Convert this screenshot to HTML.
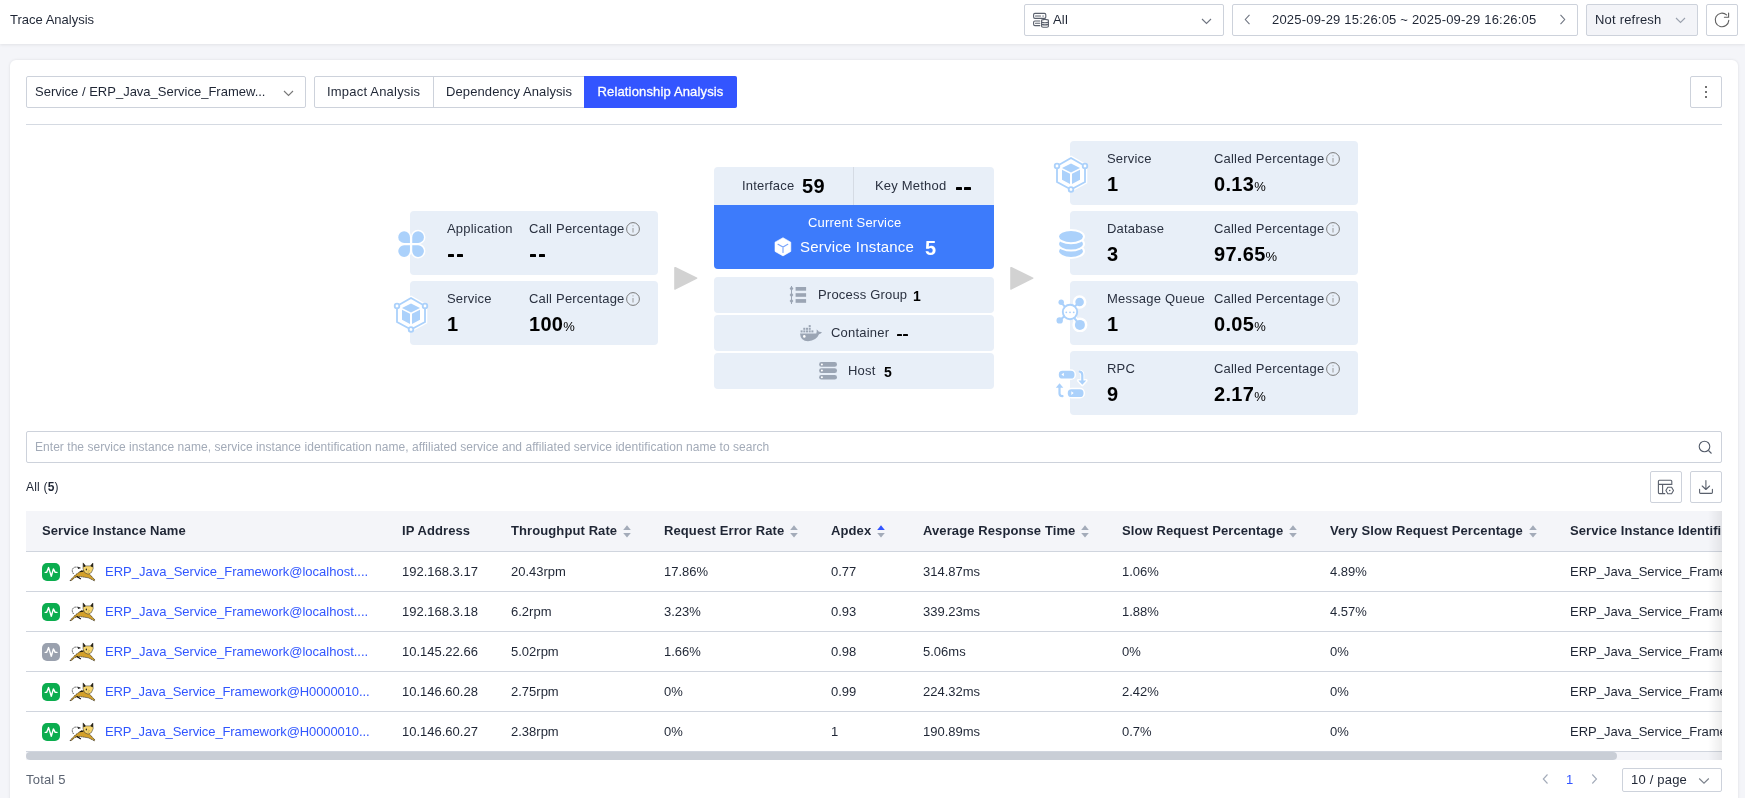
<!DOCTYPE html>
<html><head><meta charset="utf-8">
<style>
*{box-sizing:border-box;margin:0;padding:0}
html,body{width:1745px;height:798px;overflow:hidden}
body{background:#f4f5f9;font-family:"Liberation Sans",sans-serif;color:#1f2635;font-size:13px;position:relative;letter-spacing:0.2px}
.abs{position:absolute}
.hdr{position:absolute;left:0;top:0;width:1745px;height:44px;background:#fff;box-shadow:0 1px 3px rgba(0,0,0,0.08)}
.box{position:absolute;border:1px solid #cdd2db;border-radius:2px;background:#fff}
.card{position:absolute;left:10px;top:60px;width:1728px;height:760px;background:#fff;border-radius:6px;box-shadow:0 0 3px rgba(0,0,0,0.1)}
.t{position:absolute;white-space:nowrap;line-height:16px}
.tc{position:absolute;border-radius:4px;background:#e8eff8}
.lbl{position:absolute;white-space:nowrap;line-height:16px;color:#2a3140}
.val{position:absolute;white-space:nowrap;font-weight:bold;font-size:20px;line-height:20px;color:#000;letter-spacing:0.3px}
.val small{font-size:13px;font-weight:normal;letter-spacing:0}
.ci{position:absolute}
.th{position:absolute;top:511px;height:40px;line-height:40px;font-weight:bold;color:#1f2635;white-space:nowrap;letter-spacing:0.1px}
.td{position:absolute;height:40px;line-height:42px;white-space:nowrap;color:#1f2635;letter-spacing:0}
.rowb{position:absolute;left:26px;width:1696px;height:1px;background:#d0d5de}
.lnk{color:#3056ff}
</style></head><body>
<div id="root" style="position:absolute;left:0;top:0;width:1745px;height:798px;will-change:transform">
<div class="hdr"></div>
<div class="t" style="left:10px;top:12px;letter-spacing:0">Trace Analysis</div>

<!-- top right controls -->
<div class="box" style="left:1024px;top:4px;width:200px;height:32px"></div>
<svg class="abs" style="left:1030px;top:8px" width="24" height="24" viewBox="1030 8 24 24" fill="none" stroke="#5a606c" stroke-width="1.1" stroke-linejoin="round" stroke-linecap="round">
<rect x="1033.6" y="13.4" width="12.2" height="5" rx="1.3"/>
<path d="M1035.5 16H1040.5M1042.8 16H1043.4"/>
<path d="M1039.8 21H1034.9Q1033.6 21 1033.6 22.3V24.3Q1033.6 25.6 1034.9 25.6H1039.8M1035.5 23.3H1039.8"/>
<path d="M1041.6 20.4Q1041.6 19.4 1045 19.4Q1048.4 19.4 1048.4 20.4V26.2Q1048.4 27.3 1045 27.3Q1041.6 27.3 1041.6 26.2Z"/>
<path d="M1041.6 22.2Q1045 23.2 1048.4 22.2M1041.6 24.4Q1045 25.4 1048.4 24.4"/>
</svg>
<div class="t" style="left:1053px;top:12px">All</div>
<svg class="abs" style="left:1200.5px;top:17.5px" width="11" height="7" viewBox="0 0 11 7"><path d="M1 1l4.5 4.5L10 1" fill="none" stroke="#6e7480" stroke-width="1.1"/></svg>

<div class="box" style="left:1232px;top:4px;width:346px;height:32px"></div>
<svg class="abs" style="left:1244px;top:14px" width="7" height="11" viewBox="0 0 7 11"><path d="M5.5 0.8L1.3 5.5l4.2 4.7" fill="none" stroke="#6e7480" stroke-width="1.1"/></svg>
<div class="t" style="left:1272px;top:12px">2025-09-29 15:26:05 ~ 2025-09-29 16:26:05</div>
<svg class="abs" style="left:1559px;top:14px" width="7" height="11" viewBox="0 0 7 11"><path d="M1.5 0.8l4.2 4.7-4.2 4.7" fill="none" stroke="#6e7480" stroke-width="1.1"/></svg>

<div class="box" style="left:1586px;top:4px;width:112px;height:32px;background:#f3f4f8"></div>
<div class="t" style="left:1595px;top:12px">Not refresh</div>
<svg class="abs" style="left:1675px;top:17px" width="11" height="7" viewBox="0 0 11 7"><path d="M1 1l4.5 4.5L10 1" fill="none" stroke="#9aa1ad" stroke-width="1.1"/></svg>

<div class="box" style="left:1706px;top:4px;width:32px;height:32px"></div>
<svg class="abs" style="left:1708px;top:6px" width="28" height="28" viewBox="1708 6 28 28" fill="none" stroke="#606060" stroke-width="1.1" stroke-linecap="round">
<path d="M1728.8 20.4A6.8 6.8 0 1 1 1726.6 14.9"/>
<path d="M1728.6 13V17.3H1724.4"/>
</svg>

<div class="card"></div>

<!-- toolbar -->
<div class="box" style="left:26px;top:76px;width:280px;height:32px"></div>
<div class="t" style="left:35px;top:84px;letter-spacing:0">Service / ERP_Java_Service_Framew...</div>
<svg class="abs" style="left:282.5px;top:89.5px" width="11" height="7" viewBox="0 0 11 7"><path d="M1 1l4.5 4.5L10 1" fill="none" stroke="#777" stroke-width="1.1"/></svg>

<div class="box" style="left:314px;top:76px;width:423px;height:32px"></div>
<div class="abs" style="left:433px;top:76px;width:1px;height:32px;background:#cdd2db"></div>
<div class="abs" style="left:584px;top:76px;width:153px;height:32px;background:#3355ff;border-radius:0 2px 2px 0"></div>
<div class="t" style="left:327px;top:84px">Impact Analysis</div>
<div class="t" style="left:446px;top:84px;letter-spacing:0.1px">Dependency Analysis</div>
<div class="t" style="left:597.5px;top:84px;color:#fff;letter-spacing:0.15px;-webkit-text-stroke:0.3px #fff">Relationship Analysis</div>

<div class="box" style="left:1690px;top:76px;width:32px;height:32px"></div>
<div class="abs" style="left:1705px;top:86px;width:2px;height:2px;background:#444;border-radius:1px"></div>
<div class="abs" style="left:1705px;top:91px;width:2px;height:2px;background:#444;border-radius:1px"></div>
<div class="abs" style="left:1705px;top:96px;width:2px;height:2px;background:#444;border-radius:1px"></div>

<div class="abs" style="left:26px;top:124px;width:1696px;height:1px;background:#d5dae2"></div>

<!-- TOPOLOGY: left cards -->
<div class="tc" style="left:410px;top:211px;width:248px;height:64px"></div>
<div class="tc" style="left:410px;top:281px;width:248px;height:64px"></div>

<!-- center -->
<div class="tc" style="left:714px;top:167px;width:280px;height:102px;background:#e8eff8"></div>
<div class="abs" style="left:714px;top:205px;width:280px;height:64px;background:#3d7bfb;border-radius:0 0 4px 4px"></div>
<div class="abs" style="left:853px;top:167px;width:1px;height:38px;background:#d5dbe4"></div>
<div class="tc" style="left:714px;top:277px;width:280px;height:36px"></div>
<div class="tc" style="left:714px;top:315px;width:280px;height:36px"></div>
<div class="tc" style="left:714px;top:353px;width:280px;height:36px"></div>

<!-- right cards -->
<div class="tc" style="left:1070px;top:141px;width:288px;height:64px"></div>
<div class="tc" style="left:1070px;top:211px;width:288px;height:64px"></div>
<div class="tc" style="left:1070px;top:281px;width:288px;height:64px"></div>
<div class="tc" style="left:1070px;top:351px;width:288px;height:64px"></div>


<!-- topo left texts -->
<div class="lbl" style="left:447px;top:221px">Application</div>
<div class="lbl" style="left:529px;top:221px">Call Percentage</div>
<div class="abs" style="left:448px;top:254px;width:6px;height:3px;background:#000;border-radius:0.6px"></div><div class="abs" style="left:457px;top:254px;width:6px;height:3px;background:#000;border-radius:0.6px"></div>
<div class="abs" style="left:530px;top:254px;width:6px;height:3px;background:#000;border-radius:0.6px"></div><div class="abs" style="left:539px;top:254px;width:6px;height:3px;background:#000;border-radius:0.6px"></div>
<div class="lbl" style="left:447px;top:291px">Service</div>
<div class="lbl" style="left:529px;top:291px">Call Percentage</div>
<div class="val" style="left:447px;top:314px">1</div>
<div class="val" style="left:529px;top:314px">100<small>%</small></div>
<!-- center texts -->
<div class="lbl" style="left:742px;top:178px">Interface</div>
<div class="val" style="left:802px;top:176px">59</div>
<div class="lbl" style="left:875px;top:178px">Key Method</div>
<div class="abs" style="left:956px;top:187px;width:6.2px;height:3px;background:#000;border-radius:0.6px"></div><div class="abs" style="left:964.4px;top:187px;width:6.4px;height:3px;background:#000;border-radius:0.6px"></div>
<div class="t" style="left:808px;top:215px;color:#fff">Current Service</div>
<div class="t" style="left:800px;top:239px;color:#fff;font-size:15px;line-height:16px">Service Instance</div>
<div class="val" style="left:925px;top:238px;color:#fff">5</div>
<div class="lbl" style="left:818px;top:287px">Process Group</div>
<div class="val" style="left:913px;top:288px;font-size:14px;line-height:16px">1</div>
<div class="lbl" style="left:831px;top:325px">Container</div>
<div class="abs" style="left:897px;top:334px;width:4.8px;height:2px;background:#000;border-radius:0.6px"></div><div class="abs" style="left:903.2px;top:334px;width:4.9px;height:2px;background:#000;border-radius:0.6px"></div>
<div class="lbl" style="left:848px;top:363px">Host</div>
<div class="val" style="left:884px;top:364px;font-size:14px;line-height:16px">5</div>
<!-- right texts -->
<div class="lbl" style="left:1107px;top:151px">Service</div>
<div class="lbl" style="left:1214px;top:151px">Called Percentage</div>
<div class="val" style="left:1107px;top:174px">1</div>
<div class="val" style="left:1214px;top:174px">0.13<small>%</small></div>
<div class="lbl" style="left:1107px;top:221px">Database</div>
<div class="lbl" style="left:1214px;top:221px">Called Percentage</div>
<div class="val" style="left:1107px;top:244px">3</div>
<div class="val" style="left:1214px;top:244px">97.65<small>%</small></div>
<div class="lbl" style="left:1107px;top:291px">Message Queue</div>
<div class="lbl" style="left:1214px;top:291px">Called Percentage</div>
<div class="val" style="left:1107px;top:314px">1</div>
<div class="val" style="left:1214px;top:314px">0.05<small>%</small></div>
<div class="lbl" style="left:1107px;top:361px">RPC</div>
<div class="lbl" style="left:1214px;top:361px">Called Percentage</div>
<div class="val" style="left:1107px;top:384px">9</div>
<div class="val" style="left:1214px;top:384px">2.17<small>%</small></div>


<!-- topo icons -->
<svg class="abs" style="left:390px;top:223px" width="42" height="42" viewBox="-21 -21 42 42">
<g fill="#abd1fb" stroke="#fff" stroke-width="1.5">
<path d="M-0.3 -0.3H-6.8A6.6 6.6 0 1 1 -0.3 -6.8Z"/><path d="M0.5 -0.3V-6.8A6.6 6.6 0 1 1 7 -0.3Z"/>
<path d="M-0.3 0.5V7A6.6 6.6 0 1 1 -6.8 0.5Z"/><path d="M0.5 0.5H7A6.6 6.6 0 1 1 0.5 7Z"/>
</g></svg>

<svg class="abs" style="left:391px;top:293.5px" width="40" height="40" viewBox="-20 -20 40 40">
<use href="#hexcube"/></svg>
<svg class="abs" style="left:1051px;top:153.5px" width="40" height="40" viewBox="-20 -20 40 40">
<use href="#hexcube"/></svg>
<svg width="0" height="0" style="position:absolute">
<defs>
<g id="hexcube">
<path d="M0 -16L14 -8V8L0 15.5L-14 8V-8Z" fill="#fff" stroke="#fff" stroke-width="4.5"/>
<path d="M0 -16L14 -8V8L0 15.5L-14 8V-8Z" fill="#fff" stroke="#abd1fb" stroke-width="1.8"/>
<circle cx="-14" cy="-8" r="2.3" fill="#fff" stroke="#abd1fb" stroke-width="1.8"/>
<circle cx="14" cy="-8" r="2.3" fill="#fff" stroke="#abd1fb" stroke-width="1.8"/>
<circle cx="0" cy="15.5" r="2.3" fill="#fff" stroke="#abd1fb" stroke-width="1.8"/>
<path d="M0 -10.5L9 -6L0 -1.5L-9 -6Z" fill="#abd1fb"/>
<path d="M-9 -4.3L-1 -0.2V10L-9 5.8Z" fill="#abd1fb"/>
<path d="M1 -0.2L9 -4.3V5.8L1 10Z" fill="#abd1fb"/>
</g>
</defs></svg>

<svg class="abs" style="left:1051px;top:224px" width="40" height="40" viewBox="-20 -20 40 40">
<ellipse cx="0" cy="7.25" rx="13" ry="6.65" fill="#abd1fb" stroke="#fff" stroke-width="2"/>
<ellipse cx="0" cy="-0.1" rx="13" ry="6.65" fill="#abd1fb" stroke="#fff" stroke-width="2"/>
<ellipse cx="0" cy="-7.45" rx="13" ry="6.65" fill="#abd1fb" stroke="#fff" stroke-width="2"/>
</svg>

<svg class="abs" style="left:1050px;top:292px" width="40" height="40" viewBox="1050 292 40 40">
<g stroke="#fff" stroke-width="5" fill="#fff" stroke-linecap="round">
<line x1="1061.2" y1="302.3" x2="1079.9" y2="324.9"/><line x1="1079.6" y1="302" x2="1059.7" y2="320.4"/>
<circle cx="1061.2" cy="302.3" r="2.7"/><circle cx="1079.6" cy="302" r="4.3"/><circle cx="1059.7" cy="320.4" r="3.2"/><circle cx="1079.9" cy="324.9" r="5"/>
</g>
<g stroke="#abd1fb" stroke-width="2" fill="#abd1fb">
<line x1="1061.2" y1="302.3" x2="1079.9" y2="324.9"/><line x1="1079.6" y1="302" x2="1059.7" y2="320.4"/>
<circle cx="1061.2" cy="302.3" r="2.7" stroke="none"/><circle cx="1079.6" cy="302" r="4.3" stroke="none"/><circle cx="1059.7" cy="320.4" r="3.2" stroke="none"/><circle cx="1079.9" cy="324.9" r="5" stroke="none"/>
</g>
<circle cx="1070" cy="312" r="7.2" fill="#fff" stroke="#abd1fb" stroke-width="1.9"/>
<g fill="#abd1fb"><circle cx="1066.3" cy="312.3" r="0.9"/><circle cx="1070" cy="312.3" r="0.9"/><circle cx="1073.7" cy="312.3" r="0.9"/></g>
</svg>

<svg class="abs" style="left:1050px;top:362px" width="40" height="42" viewBox="1050 362 40 42">
<g stroke="#fff" stroke-width="3" fill="#fff" stroke-linejoin="round">
<rect x="1058.8" y="370.8" width="15.7" height="7.8" rx="3.6"/>
<rect x="1067.8" y="389.2" width="15.7" height="7.8" rx="3.6"/>
<path d="M1079.5 371.8Q1082.3 372 1082.3 375V381" fill="none" stroke-width="4"/>
<path d="M1078.4 380.4H1086.2L1082.3 384.8Z"/>
<path d="M1059.5 385v8.5Q1059.5 396 1062.5 396" fill="none" stroke-width="4"/>
<path d="M1055.8 387.7H1063.3L1059.55 383.2Z"/>
</g>
<g fill="#abd1fb" stroke-linejoin="round">
<rect x="1058.8" y="370.8" width="15.7" height="7.8" rx="3.6"/>
<rect x="1067.8" y="389.2" width="15.7" height="7.8" rx="3.6"/>
<path d="M1079.8 371.6Q1082.3 372 1082.3 375V381" fill="none" stroke="#abd1fb" stroke-width="2.2" stroke-linecap="round"/>
<path d="M1078.4 380.4H1086.2L1082.3 384.8Z"/>
<path d="M1059.5 386v7.5Q1059.5 396 1062.5 396.2" fill="none" stroke="#abd1fb" stroke-width="2.2" stroke-linecap="round"/>
<path d="M1055.8 387.7H1063.3L1059.55 383.2Z"/>
<path d="M1063.8 372.7v3.6l-2.4-1.8Z" fill="#fff"/>
<path d="M1071.3 391.3v3.6l2.4-1.8Z" fill="#fff"/>
</g>
</svg>

<!-- white cube -->
<svg class="abs" style="left:772px;top:235px" width="22" height="24" viewBox="772 235 22 24">
<path d="M783 237.7L790.8 242.2V251.4L783 255.9L775 251.4V242.2Z" fill="#fff" stroke="#fff" stroke-width="0.6" stroke-linejoin="round"/>
<path d="M778 244.3L783 247L787.8 244.3M783 247V252.5" fill="none" stroke="#7ba5fb" stroke-width="1.1" stroke-linecap="round"/>
</svg>

<!-- process group -->
<svg class="abs" style="left:786px;top:283px" width="24" height="24" viewBox="786 283 24 24">
<line x1="791.5" y1="286" x2="791.5" y2="304" stroke="#9ba5b4" stroke-width="1"/>
<g fill="#9ba5b4"><path d="M791.5 286.3l1.9 2.3-1.9 2.3-1.9-2.3Z"/><path d="M791.5 292.6l1.9 2.3-1.9 2.3-1.9-2.3Z"/><path d="M791.5 298.7l1.9 2.3-1.9 2.3-1.9-2.3Z"/>
<rect x="795.6" y="287" width="10.5" height="3.7"/><rect x="795.6" y="293.2" width="10.5" height="3.6"/><rect x="795.6" y="299.1" width="10.5" height="3.7"/></g>
</svg>

<!-- docker -->
<svg class="abs" style="left:798px;top:322px" width="26" height="22" viewBox="798 322 26 22">
<g fill="#9ba5b4">
<path d="M800 333.4H816.3Q817 331.2 816.6 329.4Q818.2 330 818.8 331.8Q820.8 331.6 822 332.3Q821 334 819 334.2Q816.5 340.5 808 341.2Q800.6 341.2 800 333.4Z"/>
<rect x="800.6" y="330.4" width="2" height="2"/><rect x="803.3" y="330.4" width="2" height="2"/><rect x="806" y="330.4" width="2" height="2"/><rect x="808.7" y="330.4" width="2" height="2"/><rect x="811.4" y="330.4" width="2" height="2"/>
<rect x="803.3" y="327.8" width="2" height="2"/><rect x="806" y="327.8" width="2" height="2"/><rect x="808.7" y="327.8" width="2" height="2"/>
<rect x="808.7" y="325.1" width="2" height="2"/>
</g>
<circle cx="804.3" cy="336.4" r="1.3" fill="#fff"/>
</svg>

<!-- host -->
<svg class="abs" style="left:817px;top:360px" width="22" height="22" viewBox="817 360 22 22">
<g fill="#9ba5b4"><rect x="819.1" y="362.1" width="17.9" height="4.7" rx="2.3"/><rect x="819.1" y="368.2" width="17.9" height="4.8" rx="2.3"/><rect x="819.1" y="374.9" width="17.9" height="4.7" rx="2.3"/></g>
<g fill="#fff"><circle cx="821.9" cy="364.45" r="1"/><circle cx="821.9" cy="370.6" r="1"/><circle cx="821.9" cy="377.25" r="1"/></g>
</svg>

<!-- info icons -->
<svg width="0" height="0" style="position:absolute"><defs><g id="info"><circle cx="0" cy="0" r="6.4" fill="none" stroke="#7a7a7a" stroke-width="1"/><path d="M0 -3.6V-2.6M0 -1V3.5" stroke="#9a9a9a" stroke-width="1"/></g></defs></svg>
<svg class="abs" style="left:623px;top:219px" width="20" height="20" viewBox="-10 -10 20 20"><use href="#info"/></svg>
<svg class="abs" style="left:623px;top:289px" width="20" height="20" viewBox="-10 -10 20 20"><use href="#info"/></svg>
<svg class="abs" style="left:1323px;top:149px" width="20" height="20" viewBox="-10 -10 20 20"><use href="#info"/></svg>
<svg class="abs" style="left:1323px;top:219px" width="20" height="20" viewBox="-10 -10 20 20"><use href="#info"/></svg>
<svg class="abs" style="left:1323px;top:289px" width="20" height="20" viewBox="-10 -10 20 20"><use href="#info"/></svg>
<svg class="abs" style="left:1323px;top:359px" width="20" height="20" viewBox="-10 -10 20 20"><use href="#info"/></svg>

<!-- arrows -->
<svg class="abs" style="left:673px;top:264.5px" width="26" height="26" viewBox="0 0 26 26"><path d="M1.2 2.8Q1.2 1.5 2.6 2.1L24 12.6Q25 13.2 24 13.8L2.6 24.6Q1.2 25.2 1.2 23.9Z" fill="#d2d2d2"/></svg>
<svg class="abs" style="left:1009px;top:264.5px" width="26" height="26" viewBox="0 0 26 26"><path d="M1.2 2.8Q1.2 1.5 2.6 2.1L24 12.6Q25 13.2 24 13.8L2.6 24.6Q1.2 25.2 1.2 23.9Z" fill="#d2d2d2"/></svg>

<!-- search -->
<div class="box" style="left:26px;top:431px;width:1696px;height:32px"></div>
<div class="t" style="left:35px;top:439px;font-size:12px;color:#a3abb8;letter-spacing:0.04px">Enter the service instance name, service instance identification name, affiliated service and affiliated service identification name to search</div>
<svg class="abs" style="left:1697.8px;top:439.8px" width="15" height="15" viewBox="0 0 15 15"><circle cx="6.5" cy="6.5" r="5.3" fill="none" stroke="#555d6b" stroke-width="1.1"/><path d="M10.5 10.5l3 3" stroke="#555d6b" stroke-width="1.1"/></svg>

<div class="t" style="left:26px;top:479px;font-size:12px">All (<b>5</b>)</div>
<div class="box" style="left:1650px;top:471px;width:32px;height:32px"></div>
<div class="box" style="left:1690px;top:471px;width:32px;height:32px"></div>

<!-- table -->
<div class="abs" style="left:26px;top:511px;width:1696px;height:40px;background:#f4f5f9"></div>
<div class="rowb" style="top:551px"></div>
<div class="rowb" style="top:591px"></div>
<div class="rowb" style="top:631px"></div>
<div class="rowb" style="top:671px"></div>
<div class="rowb" style="top:711px"></div>
<div class="rowb" style="top:751px"></div>
<div class="abs" style="left:26px;top:752px;width:1696px;height:8px;background:#f3f4f8"></div>
<div class="abs" style="left:26px;top:752px;width:1591px;height:8px;background:#c9ced6;border-radius:4px"></div>

<!-- table content -->
<svg width="0" height="0" style="position:absolute"><defs>
<g id="tomcat">
<path d="M73.6 574Q70.6 569.5 74.3 567.4Q76.5 566.6 80.6 567.9" fill="none" stroke="#222" stroke-width="0.8" stroke-dasharray="1.2 0.5"/>
<path d="M77.8 567L80.9 567.9L78 569Z" fill="#111"/>
<path d="M70 580.6L71.6 578.8L75.5 574.8L81.5 570.6L85.6 570.8L89 573.6L95 580L94.4 580.8L88.3 577.8L80.5 576.6L74.8 577.4L71.8 580.4Z" fill="#d3a02a" stroke="#222" stroke-width="0.7" stroke-linejoin="round" stroke-dasharray="1.5 0.6"/>
<path d="M83.1 562.9L85.6 565.9L90.1 565.9L92.9 563L93.2 568.6L91.4 572.6L88.1 574.2L84.7 572.6L83 568.8Z" fill="#f6d56c" stroke="#2a2a2a" stroke-width="0.5" stroke-linejoin="round"/>
<path d="M83.1 562.9L85.8 566.3L83.5 567.2Z" fill="#111"/><path d="M92.9 563L90.4 566.3L92.8 567.2Z" fill="#111"/>
<path d="M76.6 576.3L80.8 579" stroke="#111" stroke-width="1.2"/>
<ellipse cx="86.3" cy="569.6" rx="0.6" ry="1" fill="#111"/>
<path d="M88.5 570.2L89.6 570.8M87.6 572L88.8 572" stroke="#7a6020" stroke-width="0.5"/>
<path d="M79.8 571.7L83.2 571.3" stroke="#111" stroke-width="1.1"/>
</g></defs></svg>
<svg class="abs" style="left:622.5px;top:524px" width="8" height="15" viewBox="0 0 8 15"><path d="M0.2 5.9L4 1.2L7.8 5.9Z" fill="#a3abb9"/><path d="M0.2 8.9H7.8L4 13.6Z" fill="#a3abb9"/></svg>
<svg class="abs" style="left:789.5px;top:524px" width="8" height="15" viewBox="0 0 8 15"><path d="M0.2 5.9L4 1.2L7.8 5.9Z" fill="#a3abb9"/><path d="M0.2 8.9H7.8L4 13.6Z" fill="#a3abb9"/></svg>
<svg class="abs" style="left:876.5px;top:524px" width="8" height="15" viewBox="0 0 8 15"><path d="M0.2 5.9L4 1.2L7.8 5.9Z" fill="#3355ff"/><path d="M0.2 8.9H7.8L4 13.6Z" fill="#a3abb9"/></svg>
<svg class="abs" style="left:1080.5px;top:524px" width="8" height="15" viewBox="0 0 8 15"><path d="M0.2 5.9L4 1.2L7.8 5.9Z" fill="#a3abb9"/><path d="M0.2 8.9H7.8L4 13.6Z" fill="#a3abb9"/></svg>
<svg class="abs" style="left:1288.5px;top:524px" width="8" height="15" viewBox="0 0 8 15"><path d="M0.2 5.9L4 1.2L7.8 5.9Z" fill="#a3abb9"/><path d="M0.2 8.9H7.8L4 13.6Z" fill="#a3abb9"/></svg>
<svg class="abs" style="left:1528.5px;top:524px" width="8" height="15" viewBox="0 0 8 15"><path d="M0.2 5.9L4 1.2L7.8 5.9Z" fill="#a3abb9"/><path d="M0.2 8.9H7.8L4 13.6Z" fill="#a3abb9"/></svg>
<div class="th" id="th0" style="left:42px">Service Instance Name</div>
<div class="th" id="th1" style="left:402px">IP Address</div>
<div class="th" id="th2" style="left:511px">Throughput Rate</div>
<div class="th" id="th3" style="left:664px">Request Error Rate</div>
<div class="th" id="th4" style="left:831px">Apdex</div>
<div class="th" id="th5" style="left:923px">Average Response Time</div>
<div class="th" id="th6" style="left:1122px">Slow Request Percentage</div>
<div class="th" id="th7" style="left:1330px">Very Slow Request Percentage</div>
<div class="th" id="th8" style="left:1570px;width:152px;overflow:hidden">Service Instance Identifi</div>
<svg class="abs" style="left:42px;top:563px" width="18" height="18" viewBox="0 0 18 18"><rect width="18" height="18" rx="5" fill="#0bad4f"/><path d="M3.2 9.4H4.6L6.6 4.6L9.3 13.2L11.4 5.9L13.2 9.4H15" fill="none" stroke="#fff" stroke-width="1.4" stroke-linejoin="round" stroke-linecap="round"/></svg>
<svg class="abs" style="left:69px;top:562px" width="28" height="20" viewBox="69 562 28 20"><use href="#tomcat"/></svg>
<div class="td lnk" style="left:105px;top:551px">ERP_Java_Service_Framework@localhost....</div>
<div class="td" style="left:402px;top:551px">192.168.3.17</div>
<div class="td" style="left:511px;top:551px">20.43rpm</div>
<div class="td" style="left:664px;top:551px">17.86%</div>
<div class="td" style="left:831px;top:551px">0.77</div>
<div class="td" style="left:923px;top:551px">314.87ms</div>
<div class="td" style="left:1122px;top:551px">1.06%</div>
<div class="td" style="left:1330px;top:551px">4.89%</div>
<div class="td" style="left:1570px;top:551px;width:152px;overflow:hidden">ERP_Java_Service_Frame</div>
<svg class="abs" style="left:42px;top:603px" width="18" height="18" viewBox="0 0 18 18"><rect width="18" height="18" rx="5" fill="#0bad4f"/><path d="M3.2 9.4H4.6L6.6 4.6L9.3 13.2L11.4 5.9L13.2 9.4H15" fill="none" stroke="#fff" stroke-width="1.4" stroke-linejoin="round" stroke-linecap="round"/></svg>
<svg class="abs" style="left:69px;top:602px" width="28" height="20" viewBox="69 562 28 20"><use href="#tomcat"/></svg>
<div class="td lnk" style="left:105px;top:591px">ERP_Java_Service_Framework@localhost....</div>
<div class="td" style="left:402px;top:591px">192.168.3.18</div>
<div class="td" style="left:511px;top:591px">6.2rpm</div>
<div class="td" style="left:664px;top:591px">3.23%</div>
<div class="td" style="left:831px;top:591px">0.93</div>
<div class="td" style="left:923px;top:591px">339.23ms</div>
<div class="td" style="left:1122px;top:591px">1.88%</div>
<div class="td" style="left:1330px;top:591px">4.57%</div>
<div class="td" style="left:1570px;top:591px;width:152px;overflow:hidden">ERP_Java_Service_Frame</div>
<svg class="abs" style="left:42px;top:643px" width="18" height="18" viewBox="0 0 18 18"><rect width="18" height="18" rx="5" fill="#9aa1ae"/><path d="M3.2 9.4H4.6L6.6 4.6L9.3 13.2L11.4 5.9L13.2 9.4H15" fill="none" stroke="#fff" stroke-width="1.4" stroke-linejoin="round" stroke-linecap="round"/></svg>
<svg class="abs" style="left:69px;top:642px" width="28" height="20" viewBox="69 562 28 20"><use href="#tomcat"/></svg>
<div class="td lnk" style="left:105px;top:631px">ERP_Java_Service_Framework@localhost....</div>
<div class="td" style="left:402px;top:631px">10.145.22.66</div>
<div class="td" style="left:511px;top:631px">5.02rpm</div>
<div class="td" style="left:664px;top:631px">1.66%</div>
<div class="td" style="left:831px;top:631px">0.98</div>
<div class="td" style="left:923px;top:631px">5.06ms</div>
<div class="td" style="left:1122px;top:631px">0%</div>
<div class="td" style="left:1330px;top:631px">0%</div>
<div class="td" style="left:1570px;top:631px;width:152px;overflow:hidden">ERP_Java_Service_Frame</div>
<svg class="abs" style="left:42px;top:683px" width="18" height="18" viewBox="0 0 18 18"><rect width="18" height="18" rx="5" fill="#0bad4f"/><path d="M3.2 9.4H4.6L6.6 4.6L9.3 13.2L11.4 5.9L13.2 9.4H15" fill="none" stroke="#fff" stroke-width="1.4" stroke-linejoin="round" stroke-linecap="round"/></svg>
<svg class="abs" style="left:69px;top:682px" width="28" height="20" viewBox="69 562 28 20"><use href="#tomcat"/></svg>
<div class="td lnk" style="left:105px;top:671px;letter-spacing:-0.1px">ERP_Java_Service_Framework@H0000010...</div>
<div class="td" style="left:402px;top:671px">10.146.60.28</div>
<div class="td" style="left:511px;top:671px">2.75rpm</div>
<div class="td" style="left:664px;top:671px">0%</div>
<div class="td" style="left:831px;top:671px">0.99</div>
<div class="td" style="left:923px;top:671px">224.32ms</div>
<div class="td" style="left:1122px;top:671px">2.42%</div>
<div class="td" style="left:1330px;top:671px">0%</div>
<div class="td" style="left:1570px;top:671px;width:152px;overflow:hidden">ERP_Java_Service_Frame</div>
<svg class="abs" style="left:42px;top:723px" width="18" height="18" viewBox="0 0 18 18"><rect width="18" height="18" rx="5" fill="#0bad4f"/><path d="M3.2 9.4H4.6L6.6 4.6L9.3 13.2L11.4 5.9L13.2 9.4H15" fill="none" stroke="#fff" stroke-width="1.4" stroke-linejoin="round" stroke-linecap="round"/></svg>
<svg class="abs" style="left:69px;top:722px" width="28" height="20" viewBox="69 562 28 20"><use href="#tomcat"/></svg>
<div class="td lnk" style="left:105px;top:711px;letter-spacing:-0.1px">ERP_Java_Service_Framework@H0000010...</div>
<div class="td" style="left:402px;top:711px">10.146.60.27</div>
<div class="td" style="left:511px;top:711px">2.38rpm</div>
<div class="td" style="left:664px;top:711px">0%</div>
<div class="td" style="left:831px;top:711px">1</div>
<div class="td" style="left:923px;top:711px">190.89ms</div>
<div class="td" style="left:1122px;top:711px">0.7%</div>
<div class="td" style="left:1330px;top:711px">0%</div>
<div class="td" style="left:1570px;top:711px;width:152px;overflow:hidden">ERP_Java_Service_Frame</div>
<div class="t" style="left:26px;top:772px;color:#5c6472">Total 5</div>
<div class="box" style="left:1622px;top:768px;width:100px;height:24px"></div>
<div class="t" style="left:1631px;top:772px">10 / page</div>
<div class="t" style="left:1566px;top:772px;color:#3355ff">1</div>


<!-- right fixed shadow -->
<div class="abs" style="left:1708px;top:511px;width:14px;height:249px;background:linear-gradient(to right,rgba(0,0,0,0),rgba(0,0,0,0.07))"></div>
<!-- toolbar icons -->
<svg class="abs" style="left:1650px;top:471px" width="32" height="32" viewBox="1650 471 32 32" fill="none" stroke="#5a606c" stroke-width="1.1" stroke-linejoin="round">
<path d="M1665.2 493.6H1659.4Q1658.4 493.6 1658.4 492.6V481.2Q1658.4 480.2 1659.4 480.2H1670.8Q1671.8 480.2 1671.8 481.2V485"/>
<path d="M1658.4 484.4H1671.8M1662.6 484.4V493.6"/>
<path d="M1667.8 487.2H1671.6L1673.5 490.5L1671.6 493.8H1667.8L1665.9 490.5Z"/>
<circle cx="1669.7" cy="490.5" r="0.8" fill="#5a606c" stroke="none"/>
</svg>
<svg class="abs" style="left:1690px;top:471px" width="32" height="32" viewBox="1690 471 32 32" fill="none" stroke="#5a606c" stroke-width="1.1" stroke-linecap="round" stroke-linejoin="round">
<path d="M1705.9 480.5V489.2M1702.2 486L1705.9 489.5L1709.6 486"/>
<path d="M1699.6 489.2V492.6Q1699.6 493.4 1700.4 493.4H1711.6Q1712.4 493.4 1712.4 492.6V489.2"/>
</svg>
<!-- pagination -->
<svg class="abs" style="left:1541px;top:773px" width="9" height="12" viewBox="0 0 9 12"><path d="M6.5 1.5L2.3 6L6.5 10.5" fill="none" stroke="#a3abb9" stroke-width="1.1"/></svg>
<svg class="abs" style="left:1590px;top:773px" width="9" height="12" viewBox="0 0 9 12"><path d="M2.3 1.5L6.5 6L2.3 10.5" fill="none" stroke="#a3abb9" stroke-width="1.1"/></svg>
<svg class="abs" style="left:1698px;top:776.8px" width="12" height="8" viewBox="0 0 12 8"><path d="M1.2 1.5L6 6.2L10.8 1.5" fill="none" stroke="#7a808a" stroke-width="1.1"/></svg>
</div>
</body></html>
